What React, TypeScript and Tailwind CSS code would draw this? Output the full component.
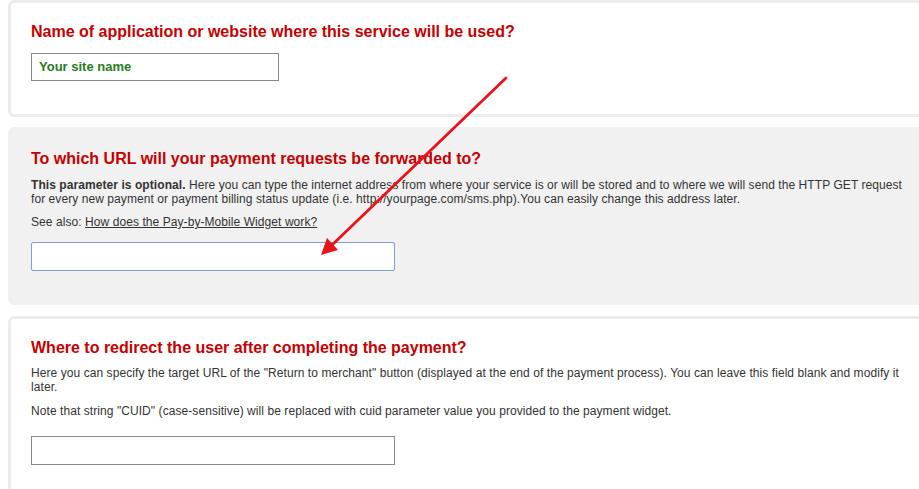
import React from "react";

export default function App() {
  return (
    <div className="relative w-[919px] h-[489px] overflow-hidden bg-white font-['Liberation_Sans',Arial,sans-serif] pl-[8px]">
      <div className="w-[940px] flex flex-col">
        {/* Panel 1 */}
        <div className="h-[117px] border-[3px] border-[#ececec] rounded-[6px] bg-white pl-[20px] pt-[19px]">
          <h2 className="text-[16px] leading-[20px] font-bold text-[#c40000]">
            Name of application or website where this service will be used?
          </h2>
          <div className="mt-[11px] w-[248px] h-[28px] border border-[#8a8a8a] bg-white flex items-center pl-[7px]">
            <span className="text-[13px] font-bold text-[#2b7a23]">Your site name</span>
          </div>
        </div>

        {/* Panel 2 */}
        <div className="mt-[10px] h-[178px] border-[3px] border-[#f1f1f1] rounded-[6px] bg-[#f1f1f1] pl-[20px] pt-[19px]">
          <h2 className="text-[16px] leading-[20px] font-bold text-[#c40000]">
            To which URL will your payment requests be forwarded to?
          </h2>
          <p className="mt-[9px] w-[872px] text-[12px] leading-[14px] tracking-[0.07px] text-[#333]">
            <b>This parameter is optional.</b> Here you can type the internet address from where your service is or will be stored and to where we will send the HTTP GET request for every new payment or payment billing status update (i.e. http://yourpage.com/sms.php).You can easily change this address later.
          </p>
          <p className="mt-[9px] text-[12px] leading-[14px] tracking-[0.07px] text-[#333]">
            See also: <span className="underline">How does the Pay-by-Mobile Widget work?</span>
          </p>
          <div className="mt-[13px] w-[364px] h-[29px] border border-[#7f9fcf] rounded-[2px] bg-white" />
        </div>

        {/* Panel 3 */}
        <div className="mt-[11px] h-[200px] border-[3px] border-[#ececec] rounded-[6px] bg-white pl-[20px] pt-[19px]">
          <h2 className="text-[16px] leading-[20px] font-bold text-[#c40000]">
            Where to redirect the user after completing the payment?
          </h2>
          <p className="mt-[8px] w-[872px] text-[12px] leading-[14px] tracking-[0.07px] text-[#333]">
            Here you can specify the target URL of the "Return to merchant" button (displayed at the end of the payment process). You can leave this field blank and modify it later.
          </p>
          <p className="mt-[10px] text-[12px] leading-[14px] tracking-[0.07px] text-[#333]">
            Note that string "CUID" (case-sensitive) will be replaced with cuid parameter value you provided to the payment widget.
          </p>
          <div className="mt-[18px] w-[364px] h-[29px] border border-[#8a8a8a] bg-white" />
        </div>
      </div>

      {/* Annotation arrow */}
      <svg className="absolute left-0 top-0 pointer-events-none" width="919" height="489">
        <line x1="506" y1="78" x2="332" y2="245" stroke="#e8141b" strokeWidth="2.8" strokeLinecap="round" />
        <polygon points="321,255 327,238 338,250" fill="#e8141b" />
      </svg>
    </div>
  );
}
